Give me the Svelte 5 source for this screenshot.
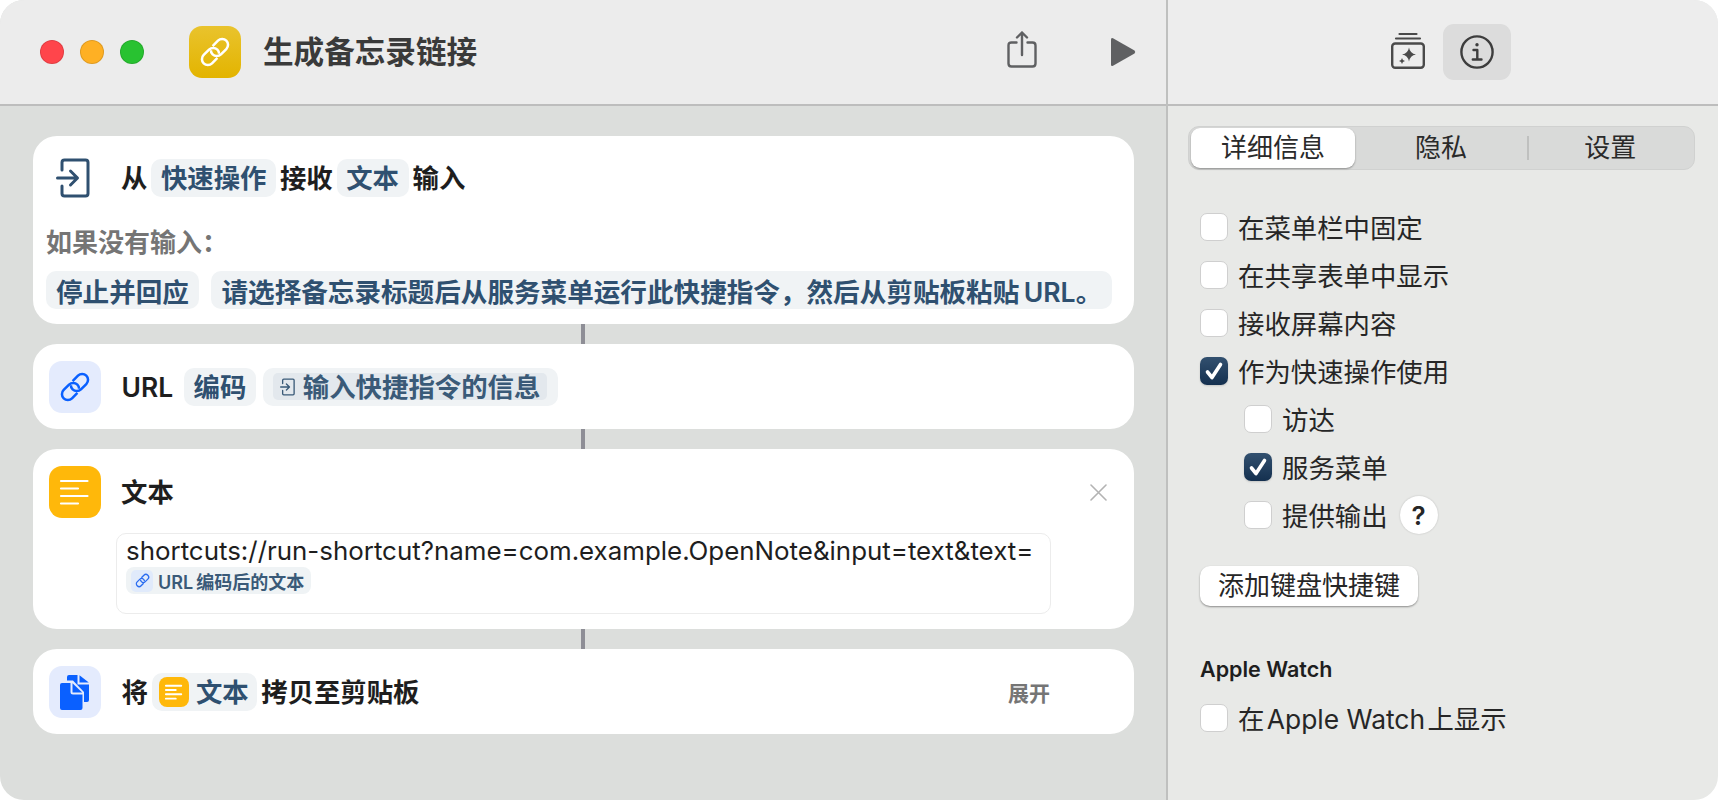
<script>
  const options = [
    { label: '在菜单栏中固定' },
    { label: '在共享表单中显示' },
    { label: '接收屏幕内容' },
    { label: '作为快速操作使用', checked: true },
    { label: '访达', sub: true },
    { label: '服务菜单', sub: true, checked: true },
    { label: '提供输出', sub: true, help: true }
  ];
</script>

{#snippet chain(color, sw)}
  <svg class="fill" viewBox="-3 -3 38 38" fill="none" stroke={color} stroke-width={sw}>
    <g transform="rotate(-45 16 16)">
      <path d="M13 23H4a7 7 0 0 1 0-14H13a7 7 0 0 1 7 7 7 7 0 0 1-2.100 5" />
      <path d="M19 9H28a7 7 0 0 1 0 14H19a7 7 0 0 1-7-7 7 7 0 0 1 2.100-5" />
    </g>
  </svg>
{/snippet}

{#snippet lines(sw)}
  <svg class="fill" viewBox="0 0 52 52" fill="none" stroke="#fff" stroke-width={sw} stroke-linecap="round">
    <path d="M12 15H38.500M12 22.500H29M12 30H38.500M12 37.500H29" />
  </svg>
{/snippet}

{#snippet entry(color, sw)}
  <svg class="fill" viewBox="0 0 34 40" fill="none" stroke={color} stroke-width={sw} stroke-linecap="round" stroke-linejoin="round">
    <path d="M6 12V4.500Q6 2 8.500 2H29.500Q32 2 32 4.500V35.500Q32 38 29.500 38H8.500Q6 38 6 35.500V28" />
    <path d="M1.500 20H21M14.500 13L21.500 20L14.500 27" />
  </svg>
{/snippet}

{#snippet box(o)}
  <span class="box" class:on={o.checked}>
    {#if o.checked}
      <svg class="fill" viewBox="0 0 28 28" fill="none" stroke="#fff" stroke-width="3.600" stroke-linecap="round" stroke-linejoin="round">
        <path d="M7.500 15L12 20.500L20.500 7.500" />
      </svg>
    {/if}
  </span>
{/snippet}

<div class="window">
  <main class="left">
    <header class="bar">
      <div class="lights">
        <i class="red"></i><i class="amber"></i><i class="green"></i>
      </div>
      <div class="app-icon">{@render chain('#fff', 3)}</div>
      <h1>生成备忘录链接</h1>
      <svg class="share" viewBox="0 0 30 37" fill="none" stroke="#5f6062" stroke-width="2.400" stroke-linecap="round" stroke-linejoin="round">
        <path d="M9.500 11.500H4.500Q1.500 11.500 1.500 14.500V32.500Q1.500 35.500 4.500 35.500H25.500Q28.500 35.500 28.500 32.500V14.500Q28.500 11.500 25.500 11.500H20.500" />
        <path d="M15 24V1.500M10 6.500L15 1.500L20 6.500" />
      </svg>
      <svg class="play" viewBox="0 0 26 30"><path d="M1 2.500Q1 0.300 3 1.200L24.500 13.400Q26 15 24.500 16.600L3 28.800Q1 29.700 1 27.500Z" fill="#5f6062" /></svg>
    </header>

    <div class="flow">
      <section class="card first">
        <div class="row">
          <span class="entry-big">{@render entry('#2f5070', 3)}</span>
          <div class="sentence">
            <span>从</span><span class="pill">快速操作</span><span>接收</span><span class="pill">文本</span><span>输入</span>
          </div>
        </div>
        <div class="hint">如果没有输入：</div>
        <div class="answers">
          <span class="pill">停止并回应</span>
          <span class="pill">请选择备忘录标题后从服务菜单运行此快捷指令，然后从剪贴板粘贴&#8201;URL。</span>
        </div>
      </section>
      <div class="link"></div>

      <section class="card slim">
        <div class="tile blue pad">{@render chain('#0a60ff', 3)}</div>
        <div class="sentence">
          <span class="url-word">URL</span><span class="pill">编码</span>
          <span class="pill var">
            <span class="token"><span class="mini-entry">{@render entry('#3a5a78', 3)}</span>输入快捷指令的信息</span>
          </span>
        </div>
      </section>
      <div class="link"></div>

      <section class="card text-card">
        <div class="text-head">
          <div class="tile amber-tile">{@render lines(2.200)}</div>
          <span class="text-title">文本</span>
          <svg class="close" viewBox="0 0 17 17" stroke="#b3b3b3" stroke-width="1.600" stroke-linecap="round"><path d="M1 1L16 16M16 1L1 16" /></svg>
        </div>
        <div class="field">
          <div class="url">shortcuts://run-shortcut?name=com.example.OpenNote&amp;input=text&amp;text=</div>
          <span class="inline-var">
            <span class="inline-tile">{@render chain('#2a6cf0', 3.400)}</span>URL&#8201;编码后的文本
          </span>
        </div>
      </section>
      <div class="link"></div>

      <section class="card slim">
        <div class="tile blue">
          <svg class="fill" viewBox="0 0 52 52" fill="#0a60ff">
            <path d="M20 9H28.500V18.500H40V34Q40 36 38 36H35V26L24 14.500H18V11Q18 9 20 9Z" />
            <path d="M30.500 9.200L39.800 16.500H30.500Z" />
            <path d="M13 17H21.500V26Q21.500 28.500 24 28.500H33.500V42Q33.500 44 31.500 44H13Q11 44 11 42V19Q11 17 13 17Z" />
            <path d="M23.500 17.300L33.200 26.500H23.500Z" />
          </svg>
        </div>
        <div class="sentence">
          <span>将</span>
          <span class="pill with-tile"><span class="small-tile">{@render lines(3.400)}</span>文本</span>
          <span>拷贝至剪贴板</span>
        </div>
        <span class="expand">展开</span>
      </section>
    </div>
  </main>

  <aside class="right">
    <header class="bar right-bar">
      <svg class="gallery" viewBox="0 0 34 37" fill="none" stroke="#4a4a4a" stroke-width="2.200" stroke-linecap="round">
        <path d="M8.500 2H25.500M5 6.500H29" />
        <rect x="1.200" y="11.500" width="31.600" height="24.300" rx="3" stroke-width="2.400" />
        <path d="M18 15.500Q19 21.500 25 22.500Q19 23.500 18 29.500Q17 23.500 11 22.500Q17 21.500 18 15.500Z" fill="#4a4a4a" stroke="none" />
        <path d="M11 26Q11.400 28.600 14 29Q11.400 29.400 11 32Q10.600 29.400 8 29Q10.600 28.600 11 26Z" fill="#4a4a4a" stroke="none" />
      </svg>
      <div class="info-btn">
        <svg class="info" viewBox="0 0 34 34" fill="none" stroke="#3d3d3d" stroke-width="2.400" stroke-linecap="round" stroke-linejoin="round">
          <circle cx="17" cy="17" r="15.600" />
          <circle cx="17" cy="9.800" r="1.700" fill="#3d3d3d" stroke="none" />
          <path d="M13.500 15H17.300V24M12.800 24.500H21.500" />
        </svg>
      </div>
    </header>

    <div class="panel">
      <div class="segments">
        <span class="seg active">详细信息</span>
        <span class="seg mid">隐私</span>
        <span class="sep"></span>
        <span class="seg last">设置</span>
      </div>

      <ul class="options">
        {#each options as o}
          <li class:sub={o.sub}>
            {@render box(o)}
            <span class="lab">{o.label}</span>
            {#if o.help}<span class="help">?</span>{/if}
          </li>
        {/each}
      </ul>

      <button class="add">添加键盘快捷键</button>

      <h2>Apple Watch</h2>
      <ul class="options watch">
        <li>{@render box({})}<span class="lab">{'在\u200AApple Watch\u200A上显示'}</span></li>
      </ul>
    </div>
  </aside>
</div>

<style>
  :global(body) {
    margin: 0;
    background: #fff;
  }
  .window {
    width: 1718px;
    height: 800px;
    display: flex;
    border-radius: 24px;
    overflow: hidden;
    font-family: Inter, "Noto Sans CJK SC", sans-serif;
    color: #1e1e1e;
  }
  .fill {
    display: block;
    width: 100%;
    height: 100%;
  }
  .left {
    width: 1168px;
    flex: none;
    background: #dcdedc;
    box-sizing: border-box;
    border-right: 2px solid #bfc0bf;
  }
  .right {
    flex: 1;
    background: #e8e9e7;
  }
  .bar {
    height: 106px;
    box-sizing: border-box;
    background: #ececec;
    border-bottom: 2px solid #bdbdbd;
    display: flex;
    align-items: center;
  }
  .lights {
    display: flex;
    gap: 16px;
    margin-left: 40px;
  }
  .lights i {
    width: 24px;
    height: 24px;
    border-radius: 50%;
    box-sizing: border-box;
    border: 1px solid rgba(0, 0, 0, 0.12);
  }
  .red { background: #ff454b; }
  .amber { background: #feb024; }
  .green { background: #28c231; }
  .app-icon {
    width: 52px;
    height: 52px;
    box-sizing: border-box;
    padding: 10px;
    margin-left: 45px;
    border-radius: 13px;
    background: linear-gradient(#e9c32d, #e3b400);
  }
  h1 {
    margin: 0 0 0 22px;
    font-size: 30.600px;
    font-weight: 600;
    line-height: 40px;
    color: #3a3a3a;
  }
  .share {
    width: 30px;
    height: 37px;
    margin-left: auto;
    margin-bottom: 5px;
  }
  .play {
    width: 26px;
    height: 30px;
    margin-left: 73px;
    margin-right: 30px;
  }
  .flow {
    padding: 30px 32px 0 33px;
    display: flex;
    flex-direction: column;
  }
  .card {
    background: #fff;
    border-radius: 24px;
    box-sizing: border-box;
  }
  .link {
    width: 4px;
    height: 20px;
    background: #8e8e96;
    align-self: center;
    margin-left: -1px;
  }
  .first {
    height: 188px;
    padding: 23px 0 0 13px;
  }
  .row {
    display: flex;
    align-items: center;
    height: 38px;
  }
  .entry-big {
    width: 34px;
    height: 40px;
    margin-left: 10px;
    flex: none;
  }
  .sentence {
    display: flex;
    align-items: center;
    gap: 4px;
    margin-left: 31px;
    font-size: 26.400px;
    font-weight: 600;
    line-height: 38px;
    white-space: nowrap;
  }
  .slim .sentence {
    margin-left: 20.500px;
  }
  .url-word {
    margin-right: 7px;
  }
  .pill {
    display: inline-flex;
    align-items: center;
    height: 38px;
    padding: 0 9.500px;
    border-radius: 10px;
    background: #f0f3f5;
    color: #2f5070;
    font-size: 26.400px;
    font-weight: 600;
    white-space: nowrap;
  }
  .hint {
    margin-top: 27px;
    height: 38px;
    line-height: 38px;
    font-size: 26px;
    font-weight: 600;
    color: #757575;
  }
  .answers {
    display: flex;
    gap: 12.500px;
    margin-top: 9px;
  }
  .answers .pill {
    padding: 0 10px;
    font-size: 26.600px;
  }
  .slim {
    height: 85px;
    padding: 0 16px;
    display: flex;
    align-items: center;
    position: relative;
  }
  .tile {
    width: 52px;
    height: 52px;
    flex: none;
    border-radius: 13px;
    box-sizing: border-box;
  }
  .blue {
    background: #e4ebfd;
  }
  .pad {
    padding: 10px;
  }
  .amber-tile {
    background: #ffb80a;
  }
  .var {
    padding: 0 11px 0 10px;
    margin-left: 3px;
  }
  .token {
    display: inline-flex;
    align-items: center;
    height: 27px;
    padding: 0 7px;
    border-radius: 5px;
    background: #e3e8ed;
    color: #3a5a78;
  }
  .mini-entry {
    width: 15px;
    height: 18px;
    margin-right: 8px;
  }
  .text-card {
    height: 180px;
    padding: 17px 27px 0 16px;
  }
  .text-head {
    display: flex;
    align-items: center;
  }
  .text-title {
    margin-left: 20px;
    font-size: 26.400px;
    font-weight: 600;
    line-height: 38px;
  }
  .close {
    width: 17px;
    height: 17px;
    margin-left: auto;
  }
  .field {
    box-sizing: border-box;
    width: 935px;
    height: 81px;
    margin: 15px 0 0 67px;
    padding: 2px 9px;
    border: 1px solid #ececec;
    border-radius: 10px;
  }
  .url {
    font-size: 25.900px;
    line-height: 30px;
    white-space: nowrap;
  }
  .inline-var {
    display: inline-flex;
    align-items: center;
    height: 27px;
    margin-top: 1px;
    padding: 0 7px 0 5px;
    border-radius: 8px;
    background: #eff3f5;
    color: #3a5a78;
    font-size: 18px;
    font-weight: 600;
    white-space: nowrap;
  }
  .inline-tile {
    width: 22px;
    height: 22px;
    box-sizing: border-box;
    padding: 3.500px;
    margin-right: 5px;
    border-radius: 5px;
    background: #e0eafb;
  }
  .with-tile {
    padding: 0 8.500px 0 7px;
  }
  .small-tile {
    width: 30px;
    height: 30px;
    margin-right: 7px;
    border-radius: 8px;
    background: #ffb80a;
    overflow: hidden;
  }
  .expand {
    margin-left: auto;
    margin-right: 68px;
    font-size: 21px;
    font-weight: 600;
    color: #757575;
  }
  .right-bar {
    background: #ededed;
  }
  .gallery {
    width: 34px;
    height: 37px;
    margin-left: 223px;
    margin-bottom: 3px;
  }
  .info-btn {
    width: 67.500px;
    height: 56px;
    margin-left: 18px;
    border-radius: 11px;
    background: #dcdcdc;
    display: flex;
    align-items: center;
    justify-content: center;
  }
  .info {
    width: 34px;
    height: 34px;
  }
  .panel {
    padding: 20px 22px 0 32px;
  }
  .segments {
    height: 44px;
    width: 507px;
    box-sizing: border-box;
    margin-left: -12px;
    padding: 1px 2px;
    display: flex;
    align-items: center;
    background: #d9dad9;
    border: 1px solid #d0d1d0;
    border-radius: 11px;
    font-size: 26px;
    color: #2a2a2a;
  }
  .seg {
    height: 40px;
    line-height: 39px;
    text-align: center;
  }
  .active {
    width: 164px;
    background: #fff;
    border-radius: 9px;
    box-shadow: 0 1px 2px rgba(0, 0, 0, 0.35);
  }
  .mid {
    width: 172px;
  }
  .sep {
    width: 1.500px;
    height: 24px;
    background: #bfc0bf;
  }
  .last {
    flex: 1;
  }
  .options {
    list-style: none;
    margin: 43px 0 0;
    padding: 0;
    display: flex;
    flex-direction: column;
    gap: 20px;
    font-size: 26.400px;
    color: #262626;
  }
  .options li {
    display: flex;
    align-items: center;
    height: 28px;
    white-space: nowrap;
  }
  .options .sub {
    margin-left: 44px;
  }
  .lab {
    padding-bottom: 2px;
  }
  .box {
    width: 28px;
    height: 28px;
    flex: none;
    box-sizing: border-box;
    margin-right: 10px;
    border-radius: 7px;
    background: #fff;
    border: 1px solid #cfcfcf;
  }
  .box.on {
    border: 0;
    background: linear-gradient(#32506f, #14304f);
    box-shadow: 0 1px 2px rgba(0, 0, 0, 0.15);
  }
  .help {
    width: 38px;
    height: 38px;
    flex: none;
    margin-left: 12px;
    border-radius: 50%;
    background: #fff;
    box-shadow: 0 0 2px rgba(0, 0, 0, 0.2);
    display: flex;
    align-items: center;
    justify-content: center;
    font-weight: 600;
    font-size: 26px;
  }
  .add {
    display: block;
    width: 218px;
    height: 40px;
    margin-top: 37px;
    padding: 0;
    border: 0;
    border-radius: 10px;
    background: #fff;
    box-shadow: 0 1px 2px rgba(0, 0, 0, 0.4);
    font: inherit;
    font-size: 26px;
    line-height: 38px;
    color: #262626;
  }
  h2 {
    margin: 50px 0 0;
    font-size: 21.500px;
    font-weight: 600;
    line-height: 26px;
    color: #1e1e1e;
  }
  .watch {
    margin-top: 22px;
  }
</style>
